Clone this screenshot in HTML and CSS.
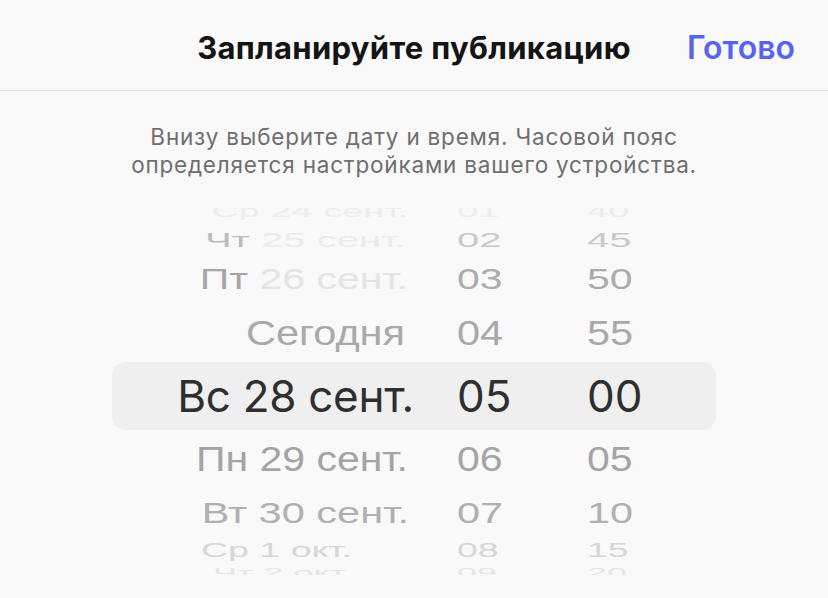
FILE: index.html
```html
<!DOCTYPE html>
<html lang="ru">
<head>
<meta charset="utf-8">
<title>Запланируйте публикацию</title>
<link rel="stylesheet" href="styles.css">
</head>
<body>
<div class="sheet">
  <header class="topbar">
    <h1 class="title">Запланируйте публикацию</h1>
    <button class="done" type="button">Готово</button>
  </header>
  <p class="hint">Внизу выберите дату и время. Часовой пояс<br>определяется настройками вашего устройства.</p>
  <div class="picker">
    <div class="row r-m4"><span class="cell date">Ср 24 сент.</span><span class="cell num">01</span><span class="cell num">40</span></div>
    <div class="row r-m3"><span class="cell date"><span class="day">Чт</span> <span class="fade">25 сент.</span></span><span class="cell num">02</span><span class="cell num">45</span></div>
    <div class="row r-m2"><span class="cell date"><span class="day">Пт</span> <span class="fade">26 сент.</span></span><span class="cell num">03</span><span class="cell num">50</span></div>
    <div class="row r-m1"><span class="cell date">Сегодня</span><span class="cell num">04</span><span class="cell num">55</span></div>
    <div class="row r-0"><span class="cell date">Вс 28 сент.</span><span class="cell num">05</span><span class="cell num">00</span></div>
    <div class="row r-p1"><span class="cell date">Пн 29 сент.</span><span class="cell num">06</span><span class="cell num">05</span></div>
    <div class="row r-p2"><span class="cell date">Вт 30 сент.</span><span class="cell num">07</span><span class="cell num">10</span></div>
    <div class="row r-p3"><span class="cell date">Ср 1 окт.</span><span class="cell num">08</span><span class="cell num">15</span></div>
    <div class="row r-p4"><span class="cell date">Чт 2 окт.</span><span class="cell num">09</span><span class="cell num">20</span></div>
  </div>
</div>
</body>
</html>
```
FILE: styles.css
```css
* { box-sizing: border-box; }

html, body {
  margin: 0;
  padding: 0;
  background: #f9f9f9;
}

body {
  font-family: Inter, "Noto Sans", sans-serif;
  width: 828px;
  height: 598px;
  overflow: hidden;
}

.sheet {
  display: flex;
  flex-direction: column;
}

.topbar {
  height: 91px;
  border-bottom: 1px solid #e3e3e3;
  display: grid;
  grid-template-columns: 1fr auto 1fr;
  align-items: center;
  padding: 4px 33px 0 33px;
}

.title {
  grid-column: 2;
  margin: 0;
  font-size: 31px;
  font-weight: 700;
  color: #141414;
  letter-spacing: 0.3px;
}

.done {
  grid-column: 3;
  justify-self: end;
  border: 0;
  background: none;
  padding: 0;
  font-family: inherit;
  font-size: 32px;
  font-weight: 600;
  color: #5764f2;
}

.hint {
  margin: 32px 0 0;
  text-align: center;
  font-size: 22.5px;
  line-height: 28px;
  color: #6f6f6f;
  letter-spacing: 0.8px;
}

.picker {
  margin: 29px 112px 0;
  height: 367px;
  overflow: hidden;
  display: flex;
  flex-direction: column;
}

.row {
  flex: none;
  display: grid;
  grid-template-columns: 302px 87px 1fr;
  grid-template-rows: 100%;
  column-gap: 43px;
  align-items: center;
  font-family: "Liberation Sans", Arial, sans-serif;
  font-size: 40px;
  line-height: 1.15;
  white-space: nowrap;
}

.cell {
  display: block;
  transform-origin: center center;
}

.date {
  text-align: right;
  padding-right: 6px;
}

.num {
  text-align: left;
}

.r-m4 { height: 16px; font-size: 38px; color: #ededed; }
.r-m4 .cell { transform: translateY(-4px) scaleY(0.42); }

.r-m3 { height: 32px; font-size: 40px; color: #c9c9c9; }
.r-m3 .cell { transform: scaleY(0.5); }
.r-m3 .date { padding-right: 8px; }
.r-m3 .day { color: #bcbcbc; }
.r-m3 .fade { color: #ececec; }

.r-m2 { height: 48px; font-size: 41px; color: #acacac; }
.r-m2 .cell { transform: scaleY(0.72); }
.r-m2 .day { color: #a6a6a6; }
.r-m2 .fade { color: #e4e4e4; }

.r-m1 { height: 58px; font-size: 41.5px; color: #a9a9a9; }
.r-m1 .cell { transform: scaleY(0.84); }
.r-m1 .date { padding-right: 9px; }

.r-0 {
  height: 68px;
  background: #efefef;
  border-radius: 14px;
  font-family: Inter, "Noto Sans", sans-serif;
  font-size: 44px;
  color: #2f2f2f;
}
.r-0 .date { padding-right: 0; letter-spacing: -0.3px; }

.r-p1 { height: 60px; font-size: 41px; color: #a4a4a4; }
.r-p1 .cell { transform: scaleY(0.86); }

.r-p2 { height: 46px; font-size: 41.5px; color: #b0b0b0; }
.r-p2 .cell { transform: scaleY(0.7); }
.r-p2 .date { padding-right: 5px; }

.r-p3 { height: 30px; font-size: 37.5px; color: #d6d6d6; }
.r-p3 .cell { transform: scaleY(0.55); }
.r-p3 .date { text-align: left; padding: 0 0 0 89px; }

.r-p4 { height: 14px; font-size: 36px; color: #e6e6e6; }
.r-p4 .cell { transform: scaleY(0.36); }
.r-p4 .date { text-align: left; padding: 0 0 0 101px; }
```
